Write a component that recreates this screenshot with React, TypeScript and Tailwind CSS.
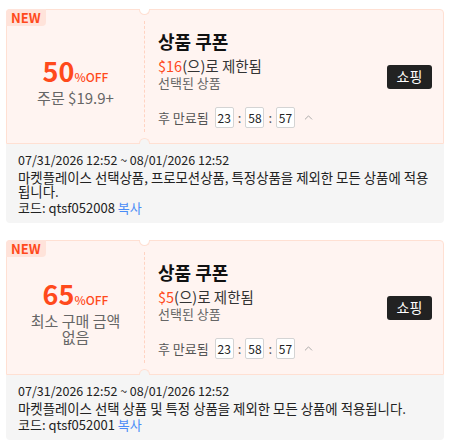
import { ChevronUp } from "lucide-react";

const FONT = "font-['Noto_Sans_CJK_KR',sans-serif]";

type Coupon = {
  pct: string;
  minText: string;
  limit: string;
  desc: string;
  code: string;
};

const coupons: Coupon[] = [
  {
    pct: "50",
    minText: "주문 $19.9+",
    limit: "$16",
    desc: "마켓플레이스 선택상품, 프로모션상품, 특정상품을 제외한 모든 상품에 적용됩니다.",
    code: "qtsf052008",
  },
  {
    pct: "65",
    minText: "최소 구매 금액 없음",
    limit: "$5",
    desc: "마켓플레이스 선택 상품 및 특정 상품을 제외한 모든 상품에 적용됩니다.",
    code: "qtsf052001",
  },
];

function TimeBox({ v }: { v: string }) {
  return (
    <span className="flex h-[21px] w-[19px] items-center justify-center rounded-[2px] border border-[#d4d4d4] bg-white text-[12px] text-[#222]">
      {v}
    </span>
  );
}

function CouponCard({ c }: { c: Coupon }) {
  return (
    <div className="w-[438px]">
      {/* top ticket */}
      <div className="relative flex h-[135px] rounded-t-[4px] border border-[#ffe0d3] bg-[#fff4f1]">
        <span className="absolute left-[-1px] top-[-1px] rounded-br-[4px] rounded-tl-[4px] bg-[#ffe3da] px-[5px] text-[13px] font-semibold leading-[17px] text-[#ff4a1c]">
          NEW
        </span>

        {/* left: discount */}
        <div className="flex w-[137px] flex-col items-center justify-center break-keep px-[16px] pt-[7px] text-center">
          <div className="flex h-[34px] items-baseline text-[#ff4a1c]">
            <span className="text-[27px] font-bold leading-[34px]">{c.pct}</span>
            <span className="text-[12px] font-medium leading-[34px]">%OFF</span>
          </div>
          <p className="mt-[2px] text-[15px] leading-[16px] text-[#666]">{c.minText}</p>
        </div>

        {/* divider + notches */}
        <div className="relative flex w-px flex-col">
          <span className="absolute left-[-5px] top-[-1px] h-[6px] w-[11px] rounded-b-full border border-t-0 border-[#ffe0d3] bg-white" />
          <span className="mx-auto my-[11px] flex-1 border-l border-dashed border-[#ffd3c2]" />
          <span className="absolute bottom-[-1px] left-[-5px] h-[6px] w-[11px] rounded-t-full border border-b-0 border-[#ffe0d3] bg-[#f5f5f5]" />
        </div>

        {/* right: info */}
        <div className="flex flex-1 items-center pl-[13px] pr-[11px]">
          <div className="flex flex-1 flex-col self-start pt-[19px]">
            <h3 className="text-[18px] font-bold leading-[24px] text-[#111]">상품 쿠폰</h3>
            <p className="mt-[4px] text-[14.5px] leading-[17px] text-[#333]">
              <span className="text-[#ff4a1c]">{c.limit}</span>(으)로 제한됨
            </p>
            <p className="text-[13px] leading-[17px] text-[#666]">선택된 상품</p>
            <div className="mt-[16px] flex items-center text-[13px] text-[#555]">
              <span className="mr-[6px]">후 만료됨</span>
              <TimeBox v="23" />
              <span className="mx-[4px]">:</span>
              <TimeBox v="58" />
              <span className="mx-[4px]">:</span>
              <TimeBox v="57" />
              <ChevronUp className="ml-[7px] h-[13px] w-[13px] text-[#999]" strokeWidth={1.5} />
            </div>
          </div>
          <button className="flex h-[24px] w-[45px] items-center justify-center rounded-[3px] bg-[#222] text-[14px] text-white">
            쇼핑
          </button>
        </div>
      </div>

      {/* bottom details */}
      <div className="rounded-b-[4px] bg-[#f5f5f5] pb-[8px] pl-[12px] pr-[12px] pt-[9px] leading-[14px] text-[#222]">
        <p className="text-[12.5px]">07/31/2026 12:52 ~ 08/01/2026 12:52</p>
        <p className="mt-[3px] text-[13.4px]">{c.desc}</p>
        <p className="mt-[3px] text-[13px]">
          코드: {c.code} <span className="text-[#4a8cf7]">복사</span>
        </p>
      </div>
    </div>
  );
}

export default function App() {
  return (
    <div className={`${FONT} min-h-[447px] w-[452px] bg-white pl-[6px] pt-[9px]`}>
      <div className="flex flex-col gap-[17px]">
        {coupons.map((c) => (
          <CouponCard key={c.code} c={c} />
        ))}
      </div>
    </div>
  );
}
